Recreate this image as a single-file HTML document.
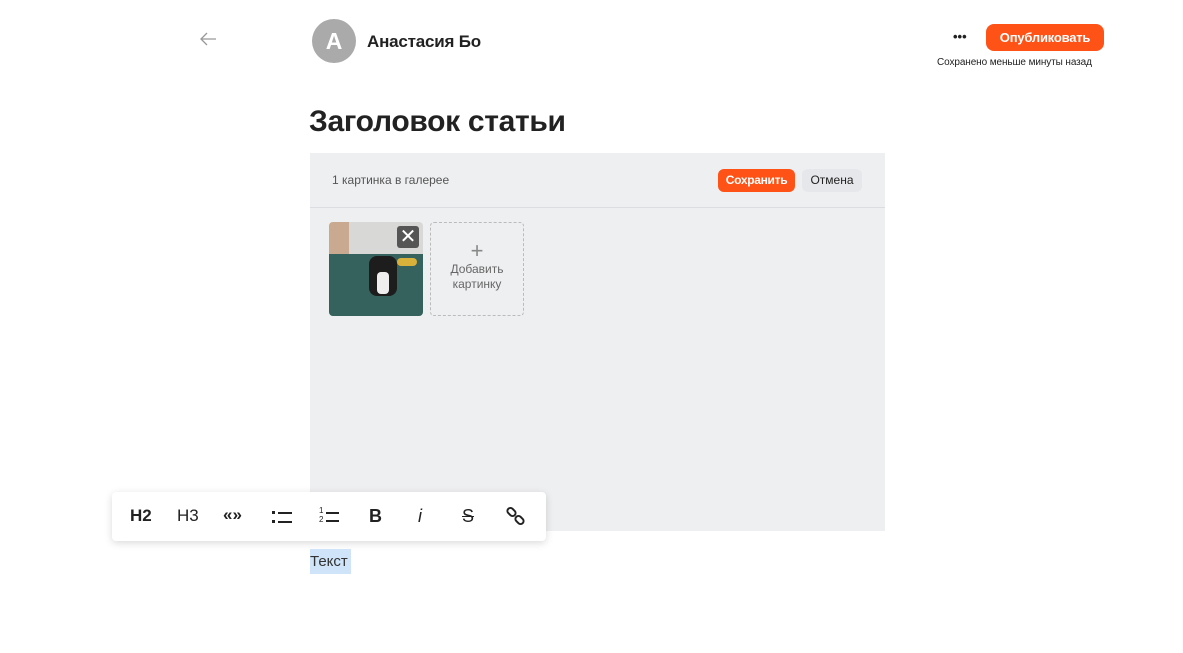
<!DOCTYPE html>
<html><head><meta charset="utf-8"><style>
body{margin:0;width:1183px;height:653px;background:#fff;font-family:"Liberation Sans","Noto Sans CJK SC",sans-serif;position:relative;overflow:hidden;color:#222}
.a{position:absolute}
</style></head><body>
<svg class="a" style="left:198px;top:31px" width="20" height="16" viewBox="0 0 20 16"><path d="M18 8H3M9 2L3 8l6 6" fill="none" stroke="#999" stroke-width="1.3"/></svg>
<div class="a" style="left:312px;top:19px;width:44px;height:44px;border-radius:50%;background:#aaa;color:#fff;font-size:23px;font-weight:bold;text-align:center;line-height:44px">A</div>
<div class="a" style="left:367px;top:32px;font-size:17px;font-weight:bold;color:#222;letter-spacing:-0.2px">Анастасия Бо</div>
<div class="a" style="left:953px;top:29px;font-size:13px;font-weight:bold;letter-spacing:0px">•••</div>
<div class="a" style="left:986px;top:24px;width:118px;height:27px;border-radius:8px;background:#ff5217;color:#fff;font-size:13px;font-weight:bold;text-align:center;line-height:27px;letter-spacing:-0.2px">Опубликовать</div>
<div class="a" style="left:937px;top:57px;font-size:10px;color:#222;letter-spacing:-0.1px">Сохранено меньше минуты назад</div>
<div class="a" style="left:309px;top:105px;font-size:30px;font-weight:bold;color:#222;letter-spacing:-0.3px">Заголовок статьи</div>
<div class="a" style="left:310px;top:153px;width:575px;height:378px;background:#eeeff1"></div>
<div class="a" style="left:310px;top:207px;width:575px;height:1px;background:#dcdde0"></div>
<div class="a" style="left:332px;top:173px;font-size:12px;color:#555">1 картинка в галерее</div>
<div class="a" style="left:718px;top:169px;width:77px;height:23px;border-radius:6px;background:#ff5217;color:#fff;font-size:12px;font-weight:bold;text-align:center;line-height:23px;letter-spacing:-0.3px">Сохранить</div>
<div class="a" style="left:802px;top:169px;width:60px;height:23px;border-radius:6px;background:#e6e7ea;color:#222;font-size:12px;text-align:center;line-height:23px">Отмена</div>
<div class="a" style="left:329px;top:222px;width:94px;height:94px;border-radius:4px;overflow:hidden;background:#d8d8d6">
<div class="a" style="left:0;top:0;width:20px;height:40px;background:#c9a98f"></div>
<div class="a" style="left:0;top:32px;width:94px;height:62px;background:#35625c"></div>
<div class="a" style="left:68px;top:36px;width:20px;height:8px;background:#d8b13a;border-radius:4px"></div>
<div class="a" style="left:40px;top:34px;width:28px;height:40px;background:#1d1d1d;border-radius:8px"></div>
<div class="a" style="left:48px;top:50px;width:12px;height:22px;background:#eee;border-radius:4px"></div>
<div class="a" style="left:68px;top:4px;width:22px;height:22px;background:#555;border-radius:3px;color:#fff;font-size:20px;text-align:center;line-height:22px">✕</div>
</div>
<div class="a" style="left:430px;top:222px;width:92px;height:92px;border:1px dashed #bbb;border-radius:4px;text-align:center;color:#666;font-size:12px">
<div style="font-size:22px;line-height:22px;margin-top:17px;color:#888">+</div><div style="line-height:15px">Добавить<br>картинку</div></div>
<div class="a" style="left:112px;top:492px;width:434px;height:49px;background:#fff;border-radius:4px;box-shadow:0 2px 8px rgba(0,0,0,.15)"></div>
<div class="a" style="left:130px;top:506px;font-size:17px;font-weight:bold;color:#222">H2</div>
<div class="a" style="left:177px;top:506px;font-size:17px;color:#222">H3</div>
<div class="a" style="left:223px;top:505px;font-size:17px;font-weight:bold;color:#222">«»</div>
<svg class="a" style="left:272px;top:509px" width="22" height="16"><rect x="0" y="2" width="3" height="3" fill="#222"/><rect x="0" y="11" width="3" height="3" fill="#222"/><rect x="6" y="3" width="14" height="2" fill="#222"/><rect x="6" y="12" width="14" height="2" fill="#222"/></svg>
<div class="a" style="left:319px;top:506px;font-size:8px;line-height:9px;color:#222">1<br>2</div>
<div class="a" style="left:326px;top:512px;width:13px;height:2px;background:#222"></div>
<div class="a" style="left:326px;top:520px;width:13px;height:2px;background:#222"></div>
<div class="a" style="left:369px;top:506px;font-size:18px;font-weight:bold;color:#222">B</div>
<div class="a" style="left:418px;top:506px;font-size:18px;font-style:italic;color:#222">i</div>
<div class="a" style="left:462px;top:506px;font-size:18px;text-decoration:line-through;color:#222">S</div>
<svg class="a" style="left:506px;top:506px" width="20" height="20" viewBox="0 0 20 20"><g fill="none" stroke="#222" stroke-width="2"><rect x="1" y="3" width="9" height="6" rx="3" transform="rotate(45 5.5 6)"/><rect x="9" y="11" width="9" height="6" rx="3" transform="rotate(45 13.5 14)"/></g></svg>
<div class="a" style="left:310px;top:549px;width:41px;height:25px;background:#cfe4f8"></div>
<div class="a" style="left:310px;top:553px;font-size:15px;color:#333">Текст</div>
</body></html>
